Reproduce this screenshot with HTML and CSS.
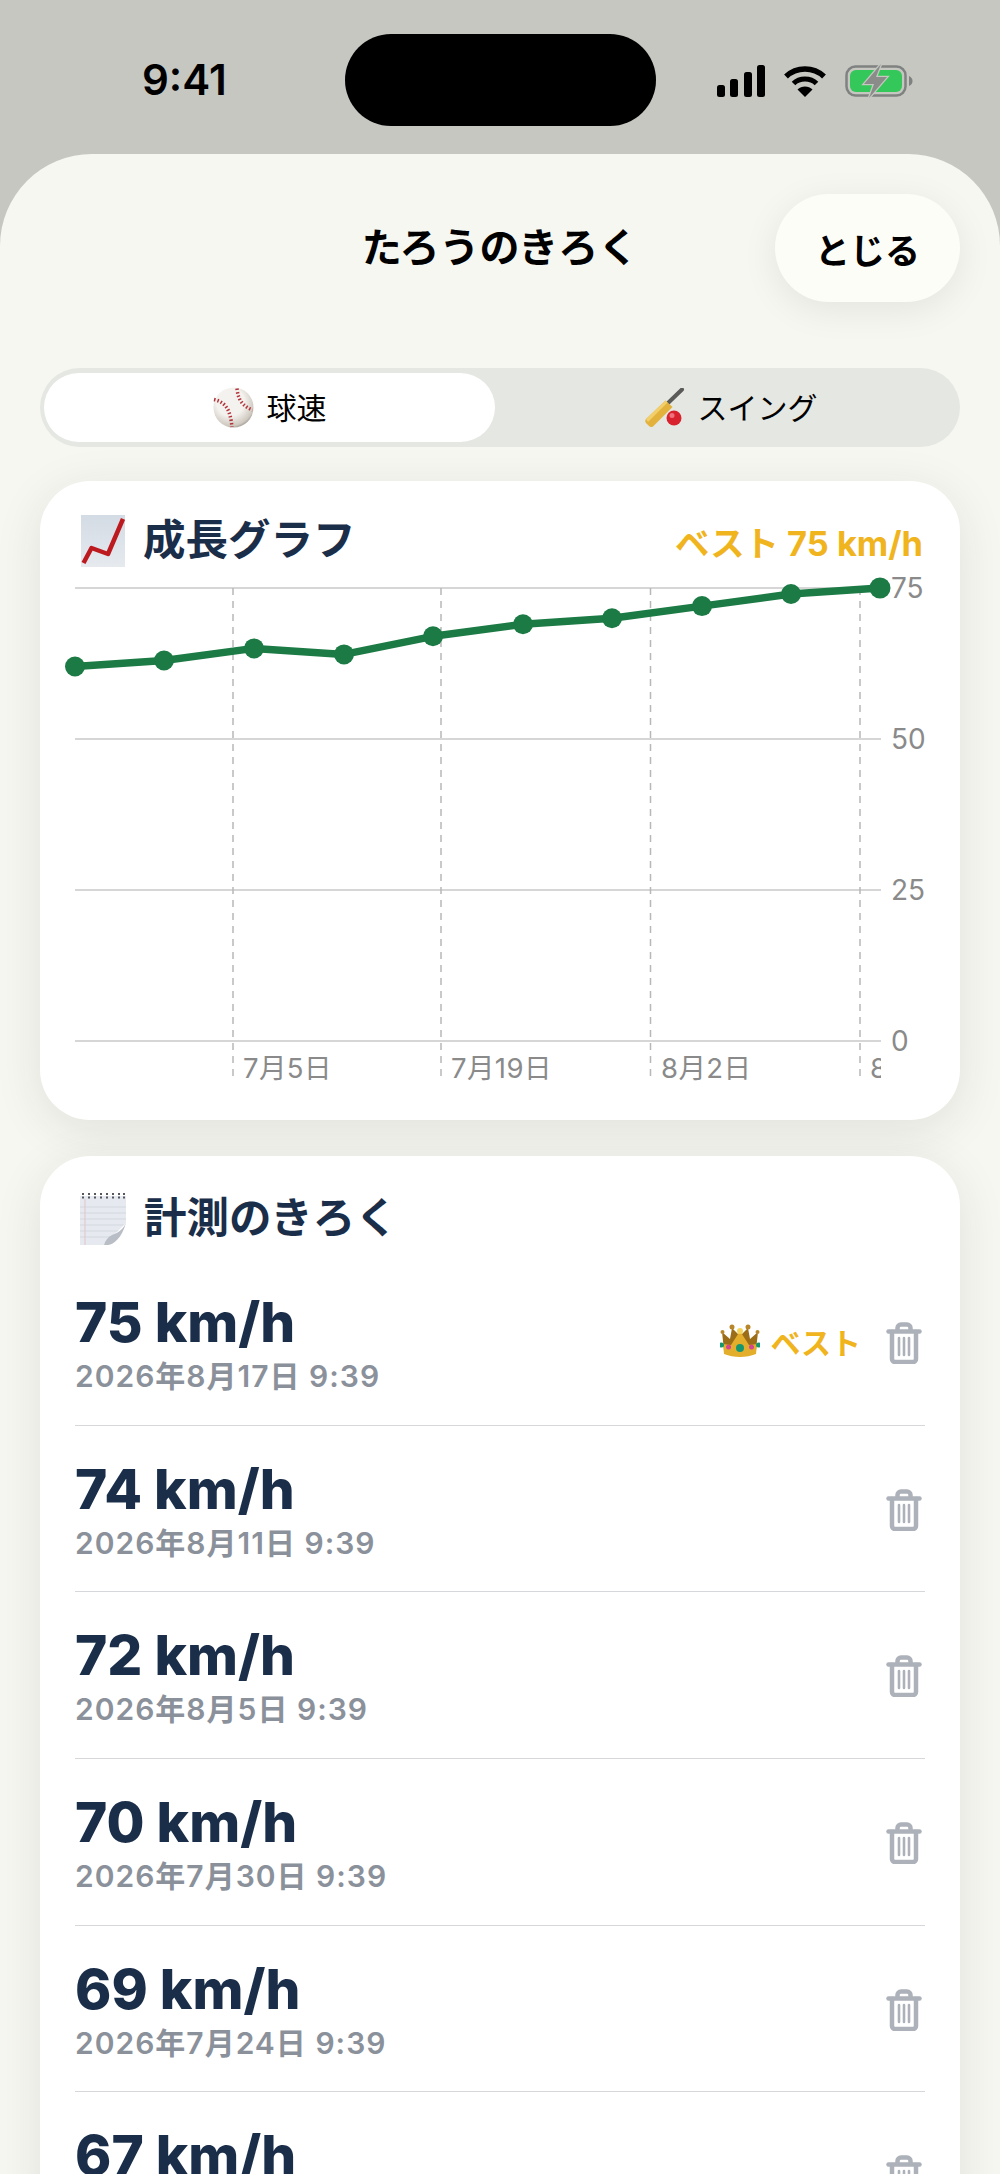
FILE: index.html
```html
<!DOCTYPE html>
<html lang="ja">
<head>
    <meta charset="UTF-8">
    <meta name="viewport" content="width=device-width, initial-scale=1.0">
    <title>たろうのきろく</title>
    <link rel="stylesheet" href="styles.css">
</head>
<body>
    <svg class="defs" width="0" height="0">
        <defs>
            <g id="trash" fill="none" stroke="#adb2ba" stroke-width="4.5" stroke-linecap="round" stroke-linejoin="round">
                <path d="M2.5 9.5h31"/>
                <path d="M11.5 8.5V6a3.5 3.5 0 0 1 3.5-3.5h6a3.5 3.5 0 0 1 3.5 3.5v2.5"/>
                <path d="M6 10v27a3 3 0 0 0 3 3h18a3 3 0 0 0 3-3V10"/>
                <path d="M13 16v17M18 16v17M23 16v17" stroke-width="2.6"/>
            </g>
        </defs>
    </svg>

    <div class="status">
        <span class="time">9:41</span>
        <div class="island"></div>
        <div class="status-icons">
            <svg width="48" height="32" viewBox="0 0 48 32" fill="#000">
                <rect x="0" y="20" width="8" height="12" rx="2.5"/>
                <rect x="13" y="14" width="8" height="18" rx="2.5"/>
                <rect x="27" y="7" width="8" height="25" rx="2.5"/>
                <rect x="40" y="0" width="8" height="32" rx="2.5"/>
            </svg>
            <svg width="42" height="32" viewBox="0 0 42 32">
                <path d="M2 11.500C12.500 1.500 29.500 1.500 40 11.500" fill="none" stroke="#000" stroke-width="5.500"/>
                <path d="M9.500 18.500C15.500 12.500 26.500 12.500 32.500 18.500" fill="none" stroke="#000" stroke-width="5"/>
                <path d="M21 32L13.500 24.500C17.500 20.500 24.500 20.500 28.500 24.500Z" fill="#000"/>
            </svg>
            <svg width="68" height="34" viewBox="0 0 68 34">
                <rect x="1.500" y="2.500" width="59" height="29" rx="9" fill="none" stroke="#7f8280" stroke-width="2.500"/>
                <rect x="5" y="6" width="52" height="22" rx="6" fill="#34c759"/>
                <path d="M64 12c2.500 1 3.500 3 3.500 5s-1 4-3.500 5z" fill="#7f8280"/>
                <path d="M36 0L19 20h10l-5 14 18-21H31z" fill="#8a8c8a" stroke="#c5c7c0" stroke-width="2.500" paint-order="stroke"/>
            </svg>
        </div>
    </div>

    <div class="sheet">
        <div class="header">
            <span></span>
            <h1 class="title">たろうのきろく</h1>
            <button class="close">とじる</button>
        </div>

        <div class="segment">
            <div class="seg-item active">
                <svg width="41" height="41" viewBox="0 0 41 41">
                    <defs>
                        <radialGradient id="ball" cx="0.42" cy="0.36" r="0.7">
                            <stop offset="0.5" stop-color="#f4f2ee"/>
                            <stop offset="0.85" stop-color="#cfc9c0"/>
                            <stop offset="1" stop-color="#8f8a82"/>
                        </radialGradient>
                    </defs>
                    <circle cx="20.500" cy="20.500" r="20" fill="url(#ball)"/>
                    <path d="M1 12.500C8 14 13 18 15.500 24c2 5 3 11 3.500 16" fill="none" stroke="#b2343c" stroke-width="3.500" stroke-dasharray="1.500 2"/>
                    <path d="M24 1.500c.5 5 1.500 9 4 13 3 4 7 7 11.500 8.500" fill="none" stroke="#b2343c" stroke-width="3.500" stroke-dasharray="1.500 2"/>
                </svg>
                <span>球速</span>
            </div>
            <div class="seg-item second">
                <svg width="40" height="40" viewBox="0 0 40 40">
                    <path d="M23 15L37 1.500" stroke="#5a5a58" stroke-width="4" stroke-linecap="round"/>
                    <path d="M1 31L20.500 12.500l7 6.500L8 38.500c-1.500 1-3 .5-4-.5L1 35c-1-1-1-3 0-4z" fill="#e3b23c"/>
                    <path d="M1 31L20.500 12.500l2 2L3 34z" fill="#f2cf6a"/>
                    <circle cx="29" cy="30" r="7.500" fill="#d8232f"/>
                    <circle cx="27" cy="27.500" r="2.500" fill="#f0727a"/>
                </svg>
                <span>スイング</span>
            </div>
        </div>

        <section class="card chart-card">
            <div class="card-head">
                <h2 class="card-title">
                    <svg width="44" height="52" viewBox="0 0 44 52">
                        <defs>
                            <linearGradient id="paper" x1="0" y1="0" x2="0" y2="1">
                                <stop offset="0" stop-color="#d3dbe4"/>
                                <stop offset="1" stop-color="#e6eaef"/>
                            </linearGradient>
                        </defs>
                        <rect width="44" height="52" fill="url(#paper)"/>
                        <path d="M2.500 48L10.500 33 27 39 42 4" fill="none" stroke="#bd1a20" stroke-width="4.500" stroke-linejoin="round"/>
                    </svg>
                    成長グラフ
                </h2>
                <span class="best-total">ベスト 75 km/h</span>
            </div>

            <svg class="chart" width="920" height="520" viewBox="0 0 920 520">
                <defs>
                    <clipPath id="plot"><rect x="0" y="0" width="841" height="520"/></clipPath>
                </defs>
                <g stroke="#c9c9c9" stroke-width="1.500">
                    <line x1="35" y1="18" x2="841" y2="18"/>
                    <line x1="35" y1="169" x2="841" y2="169"/>
                    <line x1="35" y1="320" x2="841" y2="320"/>
                    <line x1="35" y1="471" x2="841" y2="471"/>
                </g>
                <g stroke="#b8b8b8" stroke-width="1.500" stroke-dasharray="7 6">
                    <line x1="193" y1="18" x2="193" y2="511"/>
                    <line x1="401" y1="18" x2="401" y2="511"/>
                    <line x1="610.500" y1="18" x2="610.500" y2="511"/>
                    <line x1="820" y1="18" x2="820" y2="511"/>
                </g>
                <polyline class="line" points="35,96.500 124,90.500 214,78.400 304,84.400 393,66.300 483,54.200 572,48.200 662,36.100 751,24 840,18"/>
                <g fill="#1c7a45">
                    <circle cx="35" cy="96.500" r="10"/>
                    <circle cx="124" cy="90.500" r="10"/>
                    <circle cx="214" cy="78.400" r="10"/>
                    <circle cx="304" cy="84.400" r="10"/>
                    <circle cx="393" cy="66.300" r="10"/>
                    <circle cx="483" cy="54.200" r="10"/>
                    <circle cx="572" cy="48.200" r="10"/>
                    <circle cx="662" cy="36.100" r="10"/>
                    <circle cx="751" cy="24" r="10"/>
                    <circle cx="840" cy="18" r="10.500"/>
                </g>
                <g class="axis">
                    <text x="851" y="28">75</text>
                    <text x="851" y="179">50</text>
                    <text x="851" y="330">25</text>
                    <text x="851" y="481">0</text>
                </g>
                <g class="axis date" clip-path="url(#plot)">
                    <text x="203" y="508">7月5日</text>
                    <text x="411" y="508">7月19日</text>
                    <text x="621" y="508">8月2日</text>
                    <text x="830" y="508">8月16日</text>
                </g>
            </svg>
        </section>

        <section class="card list-card">
            <h2 class="card-title list-title">
                <svg width="46" height="52" viewBox="0 0 46 52">
                    <rect y="3" width="46" height="49" fill="#e6e9ef"/>
                    <g stroke="#d3d8e0" stroke-width="1">
                        <path d="M0 14h46M0 20h46M0 26h46M0 32h46M0 38h46M0 44h46"/>
                    </g>
                    <path d="M5 6v46" stroke="#e3c4c8" stroke-width="1"/>
                    <path d="M3 0v7M9 0v7M15 0v7M21 0v7M27 0v7M33 0v7M39 0v7M44 0v7" stroke="#55585e" stroke-width="2" stroke-dasharray="2 1.500"/>
                    <path d="M46 30L24 52h22z" fill="#fff"/>
                    <path d="M46 30c-4 8-9 10-14 12-4 2-7 6-8 10 6 1 16-2 22-22z" fill="#b9bec6"/>
                </svg>
                計測のきろく
            </h2>

            <div class="row">
                <div class="row-main">
                    <div class="speed">75 km/h</div>
                    <div class="date-text">2026年8月17日 9:39</div>
                </div>
                <div class="best-tag">
                    <svg width="40" height="34" viewBox="0 0 40 34">
                        <path d="M4 26L2 8l8 7 2-11 8 8 8-8 2 11 8-7-2 18z" fill="#9c6d17"/>
                        <path d="M3 20l8 1L20 7l9 14 8-1-1 10c-10 4-22 4-32 0z" fill="#e3ae2c"/>
                        <circle cx="2.500" cy="8" r="2" fill="#b8862a"/>
                        <circle cx="12" cy="3" r="2.500" fill="#b8862a"/>
                        <circle cx="20" cy="7" r="3" fill="#f4d35a"/>
                        <circle cx="28" cy="3" r="2.500" fill="#b8862a"/>
                        <circle cx="37.500" cy="8" r="2" fill="#b8862a"/>
                        <circle cx="20" cy="24" r="4" fill="#16966f"/>
                        <circle cx="8.500" cy="23" r="2.500" fill="#d2458f"/>
                        <circle cx="31.500" cy="23" r="2.500" fill="#d2458f"/>
                        <circle cx="1.500" cy="21" r="2.500" fill="#16966f"/>
                        <circle cx="38.500" cy="21" r="2.500" fill="#16966f"/>
                    </svg>
                    <span>ベスト</span>
                </div>
                <svg class="trash" width="36" height="42" viewBox="0 0 36 42"><use href="#trash"/></svg>
            </div>
            <div class="row">
                <div class="row-main">
                    <div class="speed">74 km/h</div>
                    <div class="date-text">2026年8月11日 9:39</div>
                </div>
                <svg class="trash" width="36" height="42" viewBox="0 0 36 42"><use href="#trash"/></svg>
            </div>
            <div class="row">
                <div class="row-main">
                    <div class="speed">72 km/h</div>
                    <div class="date-text">2026年8月5日 9:39</div>
                </div>
                <svg class="trash" width="36" height="42" viewBox="0 0 36 42"><use href="#trash"/></svg>
            </div>
            <div class="row">
                <div class="row-main">
                    <div class="speed">70 km/h</div>
                    <div class="date-text">2026年7月30日 9:39</div>
                </div>
                <svg class="trash" width="36" height="42" viewBox="0 0 36 42"><use href="#trash"/></svg>
            </div>
            <div class="row">
                <div class="row-main">
                    <div class="speed">69 km/h</div>
                    <div class="date-text">2026年7月24日 9:39</div>
                </div>
                <svg class="trash" width="36" height="42" viewBox="0 0 36 42"><use href="#trash"/></svg>
            </div>
            <div class="row">
                <div class="row-main">
                    <div class="speed">67 km/h</div>
                    <div class="date-text">2026年7月18日 9:39</div>
                </div>
                <svg class="trash" width="36" height="42" viewBox="0 0 36 42"><use href="#trash"/></svg>
            </div>
        </section>
    </div>
</body>
</html>
```

FILE: styles.css
```css
html, body {
    height: 100%;
    overflow: hidden;
}
body {
    margin: 0;
    background-color: #c5c7c0;
    font-family: Inter, "Noto Sans CJK JP", sans-serif;
    color: #000;
}
.defs {
    display: block;
    height: 0;
}
.status {
    height: 154px;
    display: grid;
    grid-template-columns: 345px 311px 1fr;
}
.time {
    font-size: 42px;
    font-weight: 600;
    line-height: 48px;
    padding: 56px 0 0 142px;
}
.island {
    height: 92px;
    margin-top: 34px;
    background-color: #000;
    border-radius: 46px;
}
.status-icons {
    display: flex;
    align-items: center;
    gap: 19px;
    height: 34px;
    margin: 64px 0 0 61px;
}
.sheet {
    height: 2020px;
    padding: 40px 40px 0;
    box-sizing: border-box;
    background-color: #f6f7f1;
    border-radius: 92px 92px 0 0;
    overflow: hidden;
}
.header {
    display: grid;
    grid-template-columns: 1fr auto 1fr;
    align-items: center;
    height: 108px;
}
.title {
    margin: 0;
    font-size: 40px;
    font-weight: 700;
    line-height: 1;
}
.close {
    justify-self: end;
    width: 185px;
    height: 108px;
    border: none;
    border-radius: 54px;
    background-color: #fdfdf7;
    color: #000;
    font-family: inherit;
    font-size: 35px;
    font-weight: 700;
    box-shadow: 0 8px 36px rgba(0, 0, 0, 0.08);
}
.segment {
    display: grid;
    grid-template-columns: 451px 1fr;
    height: 79px;
    margin-top: 66px;
    padding: 5px 4px;
    box-sizing: border-box;
    background-color: #e5e7e2;
    border-radius: 40px;
}
.seg-item {
    display: flex;
    align-items: center;
    justify-content: center;
    gap: 13px;
    font-size: 30px;
    line-height: 1;
}
.seg-item.second {
    padding-left: 11px;
}
.seg-item.active {
    background-color: #fff;
    border-radius: 35px;
}
.card {
    margin-top: 34px;
    background-color: #fff;
    border-radius: 50px;
    box-shadow: 0 10px 48px rgba(30, 40, 30, 0.1);
}
.chart-card {
    height: 639px;
}
.card-head {
    display: flex;
    align-items: center;
    justify-content: space-between;
    height: 89px;
    padding: 30px 37px 0 41px;
    box-sizing: border-box;
}
.card-title {
    display: flex;
    align-items: center;
    gap: 18px;
    margin: 0;
    color: #1a2e49;
    font-size: 42.5px;
    font-weight: 700;
    line-height: 1;
}
.best-total {
    color: #f0b41e;
    font-size: 34.4px;
    font-weight: 700;
}
.chart {
    display: block;
}
.line {
    fill: none;
    stroke: #1c7a45;
    stroke-width: 7.5;
    stroke-linejoin: round;
}
.axis text {
    fill: #8a8a8a;
    font-size: 28px;
}
.axis.date text {
    font-size: 27.5px;
    letter-spacing: 0.4px;
}
.list-card {
    margin-top: 36px;
    padding: 0 35px;
}
.list-title {
    height: 103px;
    padding: 22px 0 0 5px;
    box-sizing: border-box;
}
.row {
    display: flex;
    align-items: center;
    height: 166.7px;
    padding-top: 4px;
    box-sizing: border-box;
    border-bottom: 1.5px solid #d5d7da;
}
.row-main {
    flex: 1;
}
.speed {
    color: #1a2e49;
    font-size: 55px;
    font-weight: 800;
    line-height: 60px;
}
.date-text {
    color: #8b919b;
    font-size: 30px;
    font-weight: 600;
    line-height: 40px;
    margin-top: 4px;
    letter-spacing: 1px;
}
.best-tag {
    display: flex;
    align-items: center;
    gap: 10px;
    margin: 0 25px 6px 0;
    color: #f0b41e;
    font-size: 30px;
    font-weight: 700;
}
.trash {
    margin: 0 3px 2px 0;
}
```
